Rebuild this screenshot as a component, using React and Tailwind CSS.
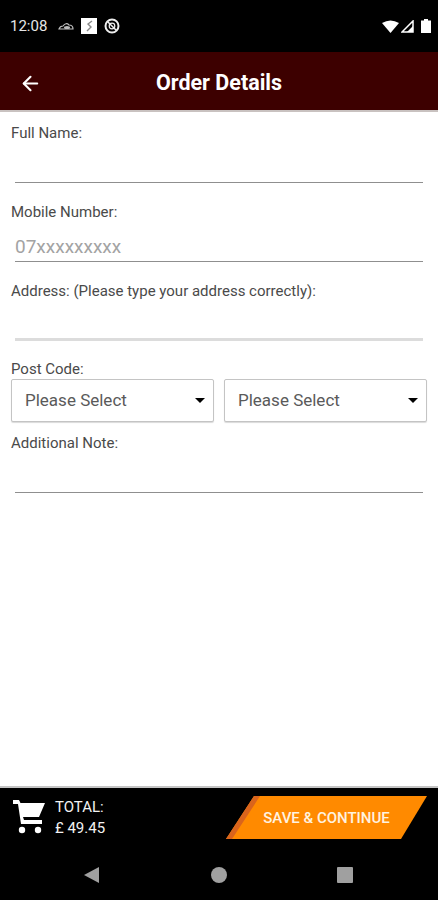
import React from 'react';
import { ArrowLeft } from 'lucide-react';

const Field = ({ label, placeholder, lineClass = 'border-b border-[#8f8f8f]' }) => (
  <div className="h-[79px]">
    <div className="h-[20px] pl-[11px] text-[15px] leading-[20px] text-[#4a4a4a]">{label}</div>
    <div className={`mx-[15px] h-[40px] pt-[10px] text-[19px] leading-[30px] text-[#a3a3a3] ${lineClass}`}>
      {placeholder}
    </div>
  </div>
);

const Select = () => (
  <div className="flex h-[43px] flex-1 items-center justify-between rounded-[2px] border border-[#c4c4c4] bg-white pl-[13px] pr-[8px] shadow-[0_1px_1px_rgba(0,0,0,0.15)]">
    <span className="text-[17px] text-[#5a5a5a]">Please Select</span>
    <span className="h-0 w-0 border-x-[5px] border-t-[5px] border-x-transparent border-t-black" />
  </div>
);

const StatusIcons = () => (
  <div className="flex items-center gap-[7px]">
    <svg width="16" height="9" viewBox="0 0 16 9">
      <path d="M1 7 Q2 4 5 4 Q8 0 11 3 Q15 3 15 7 Z" fill="none" stroke="#bdbdbd" strokeWidth="1.2" />
      <ellipse cx="9" cy="5.5" rx="3" ry="1.5" fill="#bdbdbd" />
    </svg>
    <div className="flex h-[16px] w-[16px] items-center justify-center bg-white">
      <svg width="9" height="12" viewBox="0 0 9 12">
        <path d="M7 1 L3 4 L6 7 L2 11" fill="none" stroke="#8a8a8a" strokeWidth="1.4" />
      </svg>
    </div>
    <svg width="16" height="16" viewBox="0 0 16 16">
      <circle cx="8" cy="8" r="6.5" fill="none" stroke="#eee" strokeWidth="2" />
      <circle cx="8" cy="8" r="2.8" fill="none" stroke="#eee" strokeWidth="1.2" />
      <path d="M3.5 3.5 L12.5 12.5" stroke="#eee" strokeWidth="1.5" />
    </svg>
  </div>
);

const App = () => {
  return (
    <div className="flex h-[900px] w-[438px] flex-col overflow-hidden bg-white font-['Roboto',sans-serif]">
      {/* status bar */}
      <div className="flex h-[52px] items-center justify-between bg-black pl-[10px] pr-[7px]">
        <div className="flex items-center gap-[11px]">
          <span className="text-[15px] text-[#e6e6e6]">12:08</span>
          <StatusIcons />
        </div>
        <div className="flex items-center gap-[2px]">
          <svg width="17" height="13" viewBox="0 0 17 13">
            <path d="M0 3 Q8.5 -2 17 3 L8.5 13 Z" fill="#fff" />
          </svg>
          <svg width="13" height="13" viewBox="0 0 13 13">
            <path d="M12 1 V12 H1 Z" fill="none" stroke="#fff" strokeWidth="1.5" />
            <path d="M12 6 V12 H6 Z" fill="#fff" />
          </svg>
          <svg className="ml-[5px]" width="10" height="14" viewBox="0 0 10 14">
            <path d="M3 0 H7 V1.5 H10 V14 H0 V1.5 H3 Z" fill="#fff" />
          </svg>
        </div>
      </div>

      {/* header */}
      <div className="relative flex h-[60px] items-center justify-center border-b-2 border-[#c9c2c0] bg-[#3d0000] pt-[5px]">
        <ArrowLeft className="absolute left-[19px] h-[23px] w-[23px] text-white" strokeWidth={2.2} />
        <span className="text-[21.5px] font-bold text-white">Order Details</span>
      </div>

      {/* form */}
      <div className="flex-1 pt-[11px]">
        <Field label="Full Name:" />
        <Field label="Mobile Number:" placeholder="07xxxxxxxxx" />
        <Field label="Address: (Please type your address correctly):" lineClass="border-b-[3px] border-[#dcdcdc]" />
        <div className="mt-[-1px] h-[20px] pl-[11px] text-[15px] leading-[20px] text-[#4a4a4a]">Post Code:</div>
        <div className="flex gap-[10px] pl-[11px] pr-[11px]">
          <Select />
          <Select />
        </div>
        <div className="mt-[11px]">
          <Field label="Additional Note:" />
        </div>
      </div>

      {/* total bar */}
      <div className="flex h-[60px] items-center justify-between border-t-2 border-[#c4c4c4] bg-black pl-[13px] pr-[11px]">
        <div className="flex items-center gap-[10px]">
          <svg width="32" height="34" viewBox="0 0 32 34">
            <path d="M0 0 H6 L7.5 3 H32 L26 17 H10 L11 20 H29 V24 H8 L5 4 H0 Z" fill="#fff" />
            <circle cx="9" cy="30" r="3.2" fill="#fff" />
            <circle cx="25" cy="30" r="3.2" fill="#fff" />
          </svg>
          <div className="pt-[1px] text-[15px] leading-[21px] text-[#f2f2f2]">
            <div>TOTAL:</div>
            <div>£ 49.45</div>
          </div>
        </div>
        <div className="relative flex h-[43px] w-[201px] items-center justify-center">
          <svg className="absolute inset-0" width="201" height="43" viewBox="0 0 201 43">
            <path d="M28 0 H201 L175 43 H0 Z" fill="#ff8a00" />
            <path d="M28 0 H34 L6 43 H0 Z" fill="#d9641c" />
          </svg>
          <span className="relative pt-[3px] text-[15px] font-medium text-[#fff3e0]">SAVE &amp; CONTINUE</span>
        </div>
      </div>

      {/* android nav */}
      <div className="flex h-[54px] items-center bg-black pl-[84px] pr-[85px] pt-[3px]">
        <div className="flex w-full items-center justify-between">
          <span className="h-0 w-0 border-y-[8px] border-r-[15px] border-y-transparent border-r-[#a0a0a0]" />
          <span className="ml-[2px] h-[16px] w-[16px] rounded-full bg-[#a0a0a0]" />
          <span className="h-[16px] w-[16px] rounded-[1px] bg-[#a0a0a0]" />
        </div>
      </div>
    </div>
  );
};

export default App;
